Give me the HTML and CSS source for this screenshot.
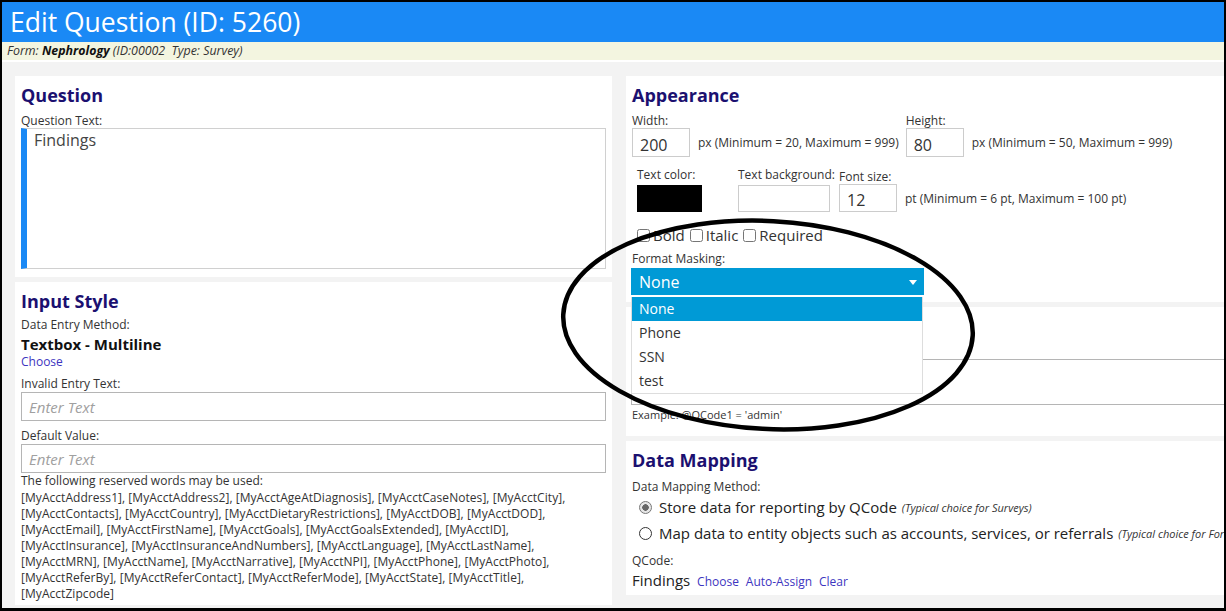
FILE: index.html
```html
<!DOCTYPE html>
<html lang="en">
<head>
    <meta charset="UTF-8">
    <meta name="viewport" content="width=device-width, initial-scale=1.0">
    <title>Edit Question</title>
    <link rel="stylesheet" href="styles.css">
</head>
<body>
<div class="page">
    <h1 class="title">Edit Question (ID: 5260)</h1>
    <div class="formbar">Form: <b>Nephrology</b> (ID:00002&nbsp; Type: Survey)</div>

    <div class="content">
        <div class="col col-left">
            <div class="panel panel-question">
                <h2>Question</h2>
                <div class="lbl">Question Text:</div>
                <div class="qtext">Findings</div>
            </div>

            <div class="panel panel-input">
                <h2>Input Style</h2>
                <div class="lbl">Data Entry Method:</div>
                <div class="method">Textbox - Multiline</div>
                <a class="link choose">Choose</a>
                <div class="lbl lbl-gap">Invalid Entry Text:</div>
                <input type="text" class="text-input" placeholder="Enter Text">
                <div class="lbl lbl-gap">Default Value:</div>
                <input type="text" class="text-input last" placeholder="Enter Text">
                <div class="lbl">The following reserved words may be used:</div>
                <div class="reserved">[MyAcctAddress1], [MyAcctAddress2], [MyAcctAgeAtDiagnosis], [MyAcctCaseNotes], [MyAcctCity], [MyAcctContacts], [MyAcctCountry], [MyAcctDietaryRestrictions], [MyAcctDOB], [MyAcctDOD], [MyAcctEmail], [MyAcctFirstName], [MyAcctGoals], [MyAcctGoalsExtended], [MyAcctID], [MyAcctInsurance], [MyAcctInsuranceAndNumbers], [MyAcctLanguage], [MyAcctLastName], [MyAcctMRN], [MyAcctName], [MyAcctNarrative], [MyAcctNPI], [MyAcctPhone], [MyAcctPhoto], [MyAcctReferBy], [MyAcctReferContact], [MyAcctReferMode], [MyAcctState], [MyAcctTitle], [MyAcctZipcode]</div>
            </div>
        </div>

        <div class="col col-right">
            <div class="panel panel-appearance">
                <h2>Appearance</h2>
                <div class="dim-row">
                    <div class="field">
                        <div class="lbl">Width:</div>
                        <div class="inline">
                            <input type="text" class="num" value="200">
                            <span class="hint">px (Minimum = 20, Maximum = 999)</span>
                        </div>
                    </div>
                    <div class="field">
                        <div class="lbl">Height:</div>
                        <div class="inline">
                            <input type="text" class="num" value="80">
                            <span class="hint">px (Minimum = 50, Maximum = 999)</span>
                        </div>
                    </div>
                </div>

                <div class="color-row">
                    <div class="field field-color">
                        <div class="lbl">Text color:</div>
                        <div class="swatch swatch-black"></div>
                    </div>
                    <div class="field field-color">
                        <div class="lbl">Text background:</div>
                        <div class="swatch swatch-white"></div>
                    </div>
                    <div class="field">
                        <div class="lbl">Font size:</div>
                        <div class="inline">
                            <input type="text" class="num" value="12">
                            <span class="hint">pt (Minimum = 6 pt, Maximum = 100 pt)</span>
                        </div>
                    </div>
                </div>

                <div class="checks">
                    <label><input type="checkbox"> Bold</label>
                    <label><input type="checkbox"> Italic</label>
                    <label><input type="checkbox"> Required</label>
                </div>

                <div class="lbl">Format Masking:</div>
                <div class="mask">
                    <div class="select">None</div>
                    <ul class="options">
                        <li class="active">None</li>
                        <li>Phone</li>
                        <li>SSN</li>
                        <li>test</li>
                    </ul>
                </div>
            </div>

            <div class="panel panel-logic">
                <div class="cond"></div>
                <div class="example">Example: @QCode1 = 'admin'</div>
            </div>

            <div class="panel panel-mapping">
                <h2>Data Mapping</h2>
                <div class="lbl">Data Mapping Method:</div>
                <label class="radio-row"><input type="radio" name="map" checked> Store data for reporting by QCode <i>(Typical choice for Surveys)</i></label>
                <label class="radio-row"><input type="radio" name="map"> Map data to entity objects such as accounts, services, or referrals <i>(Typical choice for Forms)</i></label>
                <div class="lbl lbl-gap">QCode:</div>
                <div class="qcode">Findings <a class="link">Choose</a> <a class="link">Auto-Assign</a> <a class="link">Clear</a></div>
            </div>
        </div>
    </div>

    <svg class="circle-note" width="430" height="224" viewBox="0 0 430 224">
        <ellipse cx="212" cy="111" rx="205" ry="104" transform="rotate(3 212 111)" fill="none" stroke="#000" stroke-width="4.5"/>
    </svg>
</div>
</body>
</html>
```

FILE: styles.css
```css
html,body{
    margin: 0;
    padding: 0;
}
body{
    font-family: "Open Sans", "Noto Sans", sans-serif;
    color: #333;
}
.page{
    position: relative;
    width: 1226px;
    height: 611px;
    box-sizing: border-box;
    border: 2px solid #000;
    border-bottom-width: 3px;
    overflow: hidden;
    background-color: #f3f3f3;
}
.title{
    margin: 0;
    height: 40px;
    line-height: 41px;
    padding-left: 8px;
    background-color: #1a89f5;
    color: #fff;
    font-size: 26.5px;
    font-weight: 400;
}
.formbar{
    height: 18px;
    line-height: 18px;
    padding-left: 5px;
    background-color: #f3f5e0;
    border-bottom: 2px solid #fff;
    font-size: 12.4px;
    font-style: italic;
    color: #333;
}
.formbar b{
    color: #111;
}
.content{
    display: flex;
    gap: 14px;
    padding: 14px 0 0 13px;
}
.col{
    display: flex;
    flex-direction: column;
    gap: 5px;
    flex: none;
}
.col-left{
    width: 597px;
}
.col-right{
    width: 660px;
}
.panel{
    background-color: #fff;
    padding: 8px 6px;
    box-sizing: border-box;
}
.panel h2{
    margin: 0 0 8px;
    font-size: 18px;
    line-height: 22px;
    font-weight: 700;
    color: #1b1070;
}
.lbl{
    font-size: 12px;
    line-height: 14px;
    color: #333;
}
.lbl-gap{
    margin-top: 8px;
}
.link{
    font-size: 12px;
    color: #3d35c0;
    cursor: pointer;
}

/* question */
.panel-question{
    height: 201px;
}
.qtext{
    height: 141px;
    box-sizing: border-box;
    border: 1px solid #d0d0d0;
    border-left: 6px solid #1a89f5;
    padding: 1px 7px;
    font-size: 16px;
    line-height: 21px;
    color: #444;
}

/* input style */
.panel-input{
    height: 323px;
}
.panel-input h2{
    margin-bottom: 6px;
}
.method{
    margin-top: 3px;
    font-size: 15px;
    line-height: 18px;
    font-weight: 700;
    color: #111;
}
.choose{
    display: block;
    margin-top: 2px;
    line-height: 14px;
}
.text-input{
    display: block;
    width: 100%;
    height: 29px;
    box-sizing: border-box;
    margin: 1px 0 6px;
    padding: 0 7px;
    border: 1px solid #b5b5b5;
    font-family: inherit;
    font-size: 15px;
}
.text-input.last{
    margin-bottom: 1px;
}
.text-input::placeholder{
    color: #a0a0a0;
    font-style: italic;
}
.reserved{
    margin-top: 2px;
    font-size: 12px;
    line-height: 16px;
    color: #333;
    letter-spacing: 0.05px;
}

/* appearance */
.panel-appearance{
    position: relative;
    z-index: 2;
    height: 226px;
}
.dim-row{
    display: flex;
    gap: 7px;
}
.field{
    display: flex;
    flex-direction: column;
}
.inline{
    display: flex;
    align-items: center;
}
.num{
    width: 58px;
    height: 29px;
    box-sizing: border-box;
    padding: 4px 0 0 7px;
    border: 1px solid #ccc;
    font-family: inherit;
    font-size: 16px;
    color: #333;
}
.hint{
    margin-left: 8px;
    font-size: 12px;
    color: #333;
}
.color-row{
    display: flex;
    align-items: flex-end;
    margin-top: 11px;
    padding-left: 5px;
}
.field-color{
    width: 101px;
}
.field-color .lbl{
    margin-bottom: 3px;
}
.color-row .inline .num{
    height: 28px;
}
.swatch{
    height: 27px;
    box-sizing: border-box;
}
.swatch-black{
    width: 65px;
    background-color: #000;
}
.swatch-white{
    width: 92px;
    border: 1px solid #ccc;
    background-color: #fff;
}
.checks{
    display: flex;
    margin: 13px 0 7px 4px;
    font-size: 15px;
    line-height: 20px;
    color: #333;
}
.checks label{
    margin-right: 4px;
    display: flex;
    align-items: center;
}
.checks input{
    margin: 0 3px 0 1px;
    width: 13px;
    height: 13px;
}
.mask{
    position: relative;
    margin: 2px 0 0 -1px;
    width: 293px;
}
.select{
    position: relative;
    height: 27px;
    line-height: 28px;
    padding-left: 8px;
    background-color: #009ad6;
    color: #fff;
    font-size: 16px;
}
.select::after{
    content: "";
    position: absolute;
    right: 7px;
    top: 12px;
    border-left: 4px solid transparent;
    border-right: 4px solid transparent;
    border-top: 5px solid #fff;
}
.options{
    position: absolute;
    top: 29px;
    left: 0;
    width: 292px;
    margin: 0;
    padding: 0;
    list-style: none;
    background-color: #fff;
    border: 1px solid #ddd;
    border-top: 0;
    box-sizing: border-box;
}
.options li{
    height: 24px;
    line-height: 24px;
    padding-left: 7px;
    font-size: 14px;
    color: #333;
}
.options li.active{
    background-color: #009ad6;
    color: #fff;
}

/* condition box, mostly under the open dropdown */
.panel-logic{
    height: 129px;
    padding-top: 52px;
}
.cond{
    height: 46px;
    margin-left: -1px;
    border: 1px solid #b5b5b5;
    box-sizing: border-box;
}
.example{
    margin-top: 3px;
    font-size: 11px;
    line-height: 14px;
    color: #333;
}

/* data mapping */
.panel-mapping{
    height: 154px;
}
.panel-mapping h2{
    margin-bottom: 9px;
}
.radio-row{
    display: flex;
    align-items: center;
    height: 26px;
    padding-left: 7px;
    font-size: 15px;
    color: #222;
    white-space: nowrap;
}
.radio-row i{
    margin-left: 5px;
    font-size: 11px;
    color: #333;
}
.radio-row input{
    appearance: none;
    width: 13px;
    height: 13px;
    margin: 0 7px 0 0;
    border: 1px solid #333;
    border-radius: 50%;
    background: #fff;
    box-sizing: border-box;
}
.radio-row input:checked{
    border-color: #777;
    background: radial-gradient(circle, #666 0 3px, #e6e6e6 3.5px);
}
.qcode{
    margin-top: 3px;
    font-size: 15px;
    line-height: 18px;
    color: #222;
}
.qcode .link{
    margin-left: 3px;
}

.circle-note{
    position: absolute;
    left: 554px;
    top: 212px;
    z-index: 5;
}
```
